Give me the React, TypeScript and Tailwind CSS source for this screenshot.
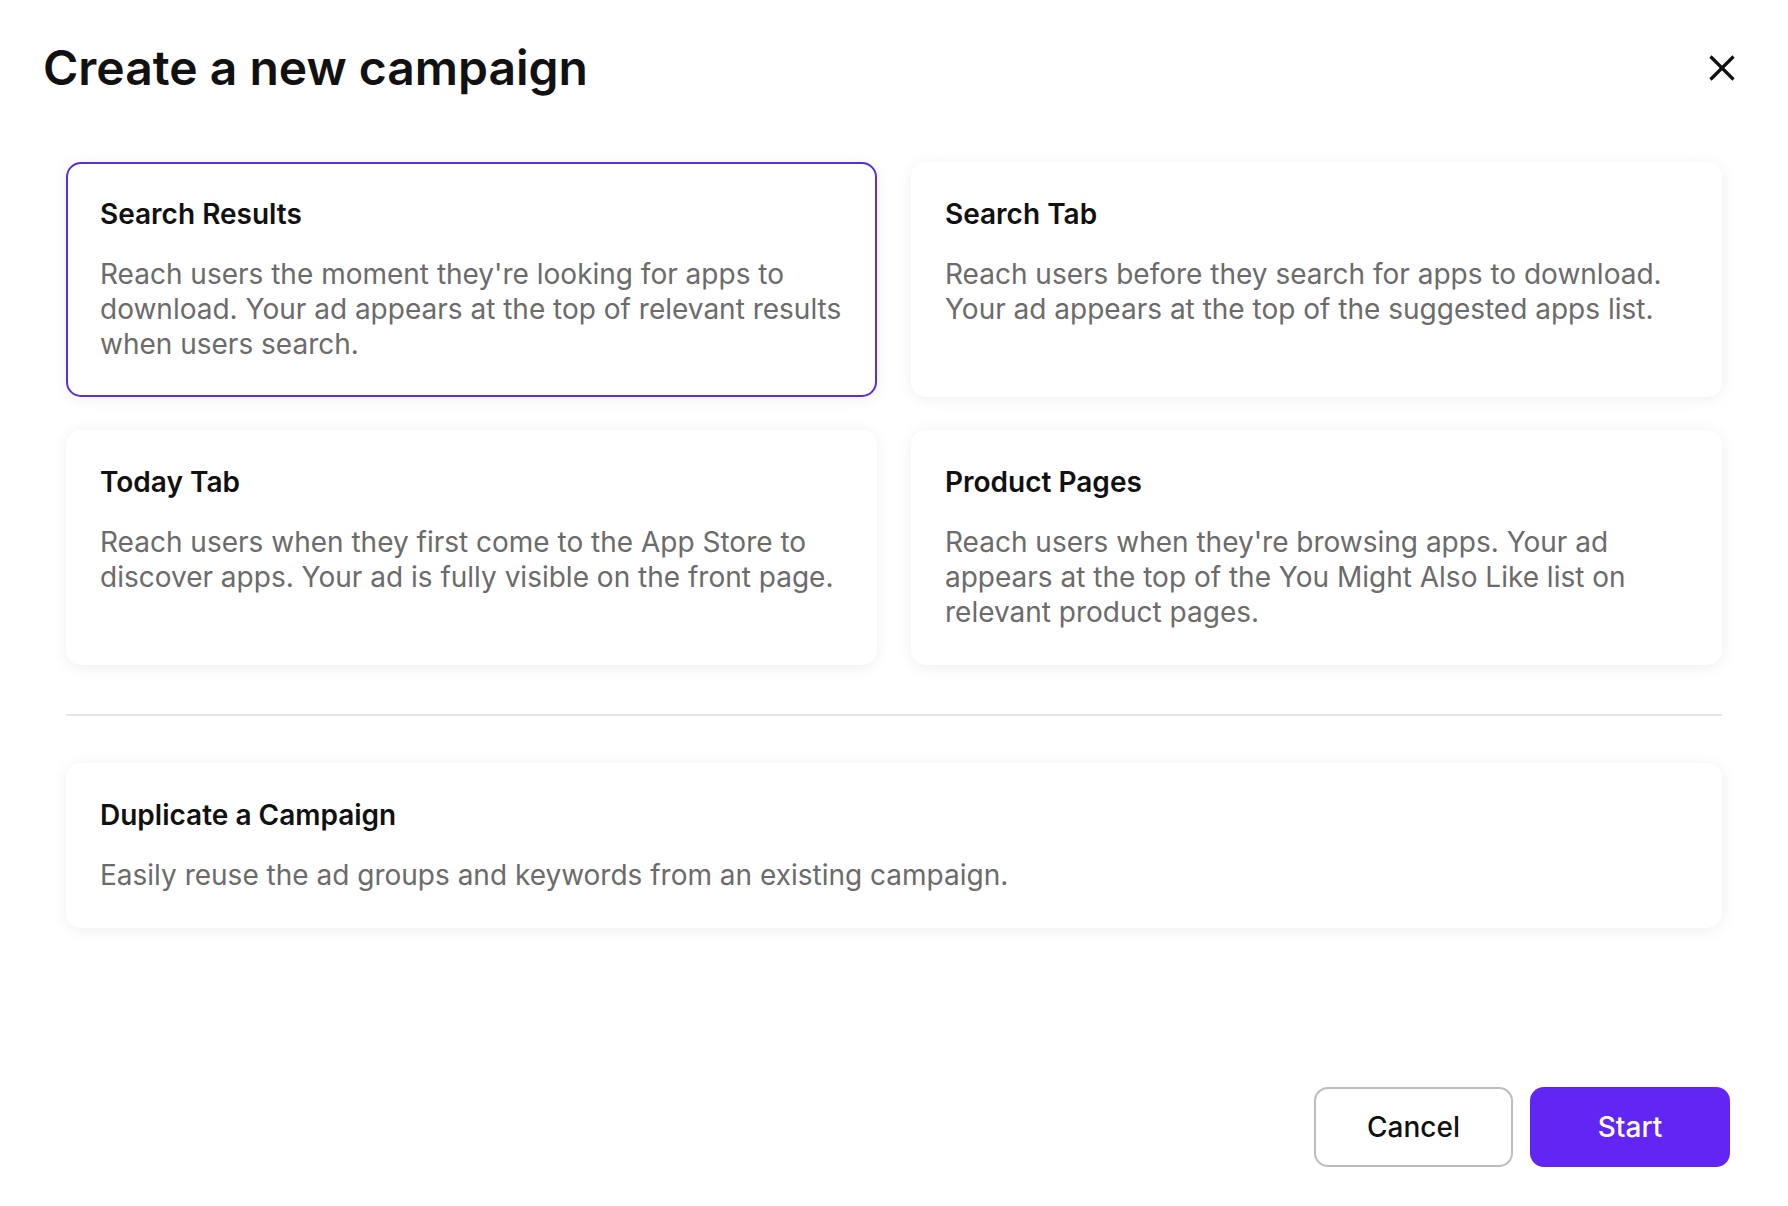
const options = [
  {
    title: 'Search Results',
    description:
      "Reach users the moment they're looking for apps to download. Your ad appears at the top of relevant results when users search.",
    selected: true,
  },
  {
    title: 'Search Tab',
    description:
      'Reach users before they search for apps to download. Your ad appears at the top of the suggested apps list.',
    selected: false,
  },
  {
    title: 'Today Tab',
    description:
      'Reach users when they first come to the App Store to discover apps. Your ad is fully visible on the front page.',
    selected: false,
  },
  {
    title: 'Product Pages',
    description:
      "Reach users when they're browsing apps. Your ad appears at the top of the You Might Also Like list on relevant product pages.",
    selected: false,
  },
];

function OptionCard({ title, description, selected }: { title: string; description: string; selected?: boolean }) {
  return (
    <div
      className={
        selected
          ? 'rounded-[15px] border-2 border-[#5b31cc] bg-white px-[32px] pt-[34px] pb-[33px] shadow-[0_2px_16px_rgba(0,0,0,0.07)]'
          : 'rounded-[15px] border-2 border-transparent bg-white px-[32px] pt-[34px] pb-[33px] shadow-[0_2px_16px_rgba(0,0,0,0.07)]'
      }
    >
      <h3 className="mb-[27px] text-[28px] leading-[32px] font-semibold text-[#111111]">{title}</h3>
      <p className="text-[28px] leading-[35px] text-[#6b6b6b]">{description}</p>
    </div>
  );
}

export default function App() {
  return (
    <div className="flex h-[1206px] w-[1788px] flex-col bg-white font-['Inter',sans-serif]">
      <header className="flex items-center justify-between pt-[40px] pr-[53px] pl-[43px]">
        <h1 className="text-[48px] leading-[56px] font-semibold text-[#111111]">Create a new campaign</h1>
        <button className="text-[#111111]">
          <svg width="26" height="26" viewBox="0 0 26 26" fill="none" stroke="currentColor" strokeWidth="3.2">
            <path d="M1.5 1.5 24.5 24.5M24.5 1.5 1.5 24.5" />
          </svg>
        </button>
      </header>

      <div className="mt-[66px] px-[66px]">
        <div className="grid grid-cols-2 gap-x-[34px] gap-y-[33px]">
          {options.map((o) => (
            <OptionCard key={o.title} {...o} />
          ))}
        </div>

        <div className="mt-[49px] mb-[47px] h-[2px] bg-[#e6e6e6]" />

        <OptionCard
          title="Duplicate a Campaign"
          description="Easily reuse the ad groups and keywords from an existing campaign."
        />
      </div>

      <div className="mt-auto flex justify-end gap-[17px] pr-[58px] pb-[39px]">
        <button className="h-[80px] w-[199px] rounded-[14px] border-2 border-[#bdbdbd] bg-white text-[28px] font-medium text-[#111111]">
          Cancel
        </button>
        <button className="h-[80px] w-[200px] rounded-[14px] bg-[#6226f4] text-[28px] font-medium text-white">
          Start
        </button>
      </div>
    </div>
  );
}
